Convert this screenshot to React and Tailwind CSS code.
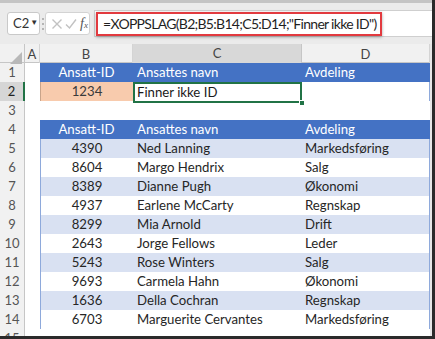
import React from "react";

const data = [
  ["4390", "Ned Lanning", "Markedsføring"],
  ["8604", "Margo Hendrix", "Salg"],
  ["8389", "Dianne Pugh", "Økonomi"],
  ["4937", "Earlene McCarty", "Regnskap"],
  ["8299", "Mia Arnold", "Drift"],
  ["2643", "Jorge Fellows", "Leder"],
  ["5243", "Rose Winters", "Salg"],
  ["9693", "Carmela Hahn", "Økonomi"],
  ["1636", "Della Cochran", "Regnskap"],
  ["6703", "Marguerite Cervantes", "Markedsføring"],
];

const GRID = "grid grid-cols-[25px_15px_93px_169px_128px_2px] h-[19px]";
const FONT = { fontFamily: "Lato, 'Open Sans', sans-serif" };

function RowHead({ n, selected }) {
  return selected ? (
    <div className="flex items-center justify-center text-[13px] text-[#222] bg-[#d6d6d6] border-b border-[#cfcfcf] border-r-2 border-r-[#217346]">
      {n}
    </div>
  ) : (
    <div className="flex items-center justify-center text-[13px] text-[#555] bg-[#f1f1f1] border-b border-[#d9d9d9] border-r border-r-[#c6c6c6]">
      {n}
    </div>
  );
}

function HeaderRow({ n }) {
  return (
    <div className={GRID}>
      <RowHead n={n} />
      <div className="bg-white" />
      <div className="bg-[#4472c4] text-white text-[13.2px] flex items-center justify-center">Ansatt-ID</div>
      <div className="bg-[#4472c4] text-white text-[13.2px] flex items-center pl-[4px]">Ansattes navn</div>
      <div className="bg-[#4472c4] text-white text-[13.2px] flex items-center pl-[3px]">Avdeling</div>
      <div className="bg-[#e6e6e6]" />
    </div>
  );
}

function DataRow({ n, row, band, last }) {
  const bg = band ? "bg-[#d9e1f2]" : "bg-white";
  const bb = last ? "border-b border-[#8ea9db]" : "border-b border-[#b4c6e7]";
  return (
    <div className={GRID}>
      <RowHead n={n} />
      <div className="bg-white" />
      <div className={`${bg} ${bb} border-l border-l-[#8ea9db] text-[13.2px] text-[#262626] flex items-center justify-center`}>{row[0]}</div>
      <div className={`${bg} ${bb} text-[13.2px] text-[#262626] flex items-center pl-[4px]`}>{row[1]}</div>
      <div className={`${bg} ${bb} border-r border-r-[#8ea9db] text-[13.2px] text-[#262626] flex items-center pl-[3px]`}>{row[2]}</div>
      <div className="bg-[#e6e6e6]" />
    </div>
  );
}

export default function App() {
  return (
    <div
      className="w-[435px] h-[339px] overflow-hidden bg-white border-r-[3px] border-b-[3px] border-[#2a2a2a] flex flex-col"
      style={FONT}
    >
      {/* formula bar */}
      <div className="h-[44px] shrink-0 bg-[#ebebeb] border-t-[3px] border-[#c4c4c4] flex items-center pl-[7px]">
        <div className="w-[33px] h-[23px] bg-white border border-[#c9c9c9] rounded-[3px] flex items-center pl-[5px] text-[13px] text-[#333]">
          C2<span className="text-[8px] ml-[1px] mt-[-3px]">▼</span>
        </div>
        <div className="w-[5px] h-[23px] flex flex-col items-center justify-center gap-[3px]">
          <span className="w-[2px] h-[2px] bg-[#b5b5b5]" />
          <span className="w-[2px] h-[2px] bg-[#b5b5b5]" />
          <span className="w-[2px] h-[2px] bg-[#b5b5b5]" />
        </div>
        <div className="w-[45px] h-[23px] bg-white border border-[#d3d3d3] rounded-[3px] flex items-center pl-[5px] gap-[2px]">
          <svg width="12" height="12" viewBox="0 0 12 12">
            <path d="M1.5 1.5 L10.5 10.5 M10.5 1.5 L1.5 10.5" stroke="#c2c2c2" strokeWidth="1.4" fill="none" />
          </svg>
          <svg width="12" height="12" viewBox="0 0 12 12">
            <path d="M1 6.5 L4.5 10 L11 1.5" stroke="#c2c2c2" strokeWidth="1.4" fill="none" />
          </svg>
          <span className="text-[14px] italic text-[#555] ml-[1px]" style={{ fontFamily: "'Liberation Serif', serif" }}>
            f<span className="text-[9px]">x</span>
          </span>
        </div>
        <div className="flex-1 h-[27px] ml-[4px] bg-white border-y border-l border-[#cfcfcf] flex items-center">
          <div className="ml-[1px] w-[286px] h-[24px] border-2 border-[#e23a3f] shadow-[0_1px_3px_rgba(0,0,0,0.35)] flex items-center pl-[5px] text-[14px] tracking-[-0.7px] text-[#1f1f1f] whitespace-nowrap">
            =XOPPSLAG(B2;B5:B14;C5:D14;"Finner ikke ID")
          </div>
        </div>
      </div>

      {/* column headers */}
      <div className={`${GRID} shrink-0 bg-[#f1f1f1] border-b border-[#c6c6c6] text-[13px] text-[#444]`}>
        <div className="relative border-r border-[#c6c6c6]">
          <svg className="absolute right-[2px] bottom-[2px]" width="12" height="12" viewBox="0 0 12 12">
            <path d="M12 0 L12 12 L0 12 Z" fill="#b8b8b8" />
          </svg>
        </div>
        <div className="flex items-center justify-center border-r border-[#d4d4d4]">A</div>
        <div className="flex items-center justify-center border-r border-[#d4d4d4]">B</div>
        <div className="flex items-center justify-center bg-[#d8d8d8] border-r border-[#c6c6c6] border-b-2 border-b-[#217346]">C</div>
        <div className="flex items-center justify-center border-r border-[#d4d4d4]">D</div>
        <div className="bg-[#e6e6e6]" />
      </div>

      <HeaderRow n={1} />

      {/* row 2 */}
      <div className={GRID}>
        <RowHead n={2} selected />
        <div className="bg-white" />
        <div className="bg-[#f8cbad] border-l border-b border-[#c9a48a] text-[13.2px] text-[#3a3a3a] flex items-center justify-center">1234</div>
        <div className="relative bg-white text-[13.2px] text-[#1a1a1a] flex items-center pl-[4px]">
          Finner ikke ID
          <div className="absolute inset-[0px] border-2 border-[#217346] pointer-events-none" />
          <div className="absolute right-[-3px] bottom-[-3px] w-[6px] h-[6px] bg-[#217346] border border-white" />
        </div>
        <div className="bg-white border-r border-b border-[#8ea9db]" />
        <div className="bg-[#e6e6e6]" />
      </div>

      {/* row 3 */}
      <div className={GRID}>
        <RowHead n={3} />
        <div className="bg-white" />
        <div className="bg-white" />
        <div className="bg-white" />
        <div className="bg-white" />
        <div className="bg-[#e6e6e6]" />
      </div>

      <HeaderRow n={4} />

      {data.map((row, i) => (
        <DataRow key={i} n={5 + i} row={row} band={i % 2 === 0} last={i === data.length - 1} />
      ))}

      <div className={GRID}>
        <RowHead n={15} />
        <div className="bg-white" />
        <div className="bg-white" />
        <div className="bg-white" />
        <div className="bg-white" />
        <div className="bg-[#e6e6e6]" />
      </div>
    </div>
  );
}
